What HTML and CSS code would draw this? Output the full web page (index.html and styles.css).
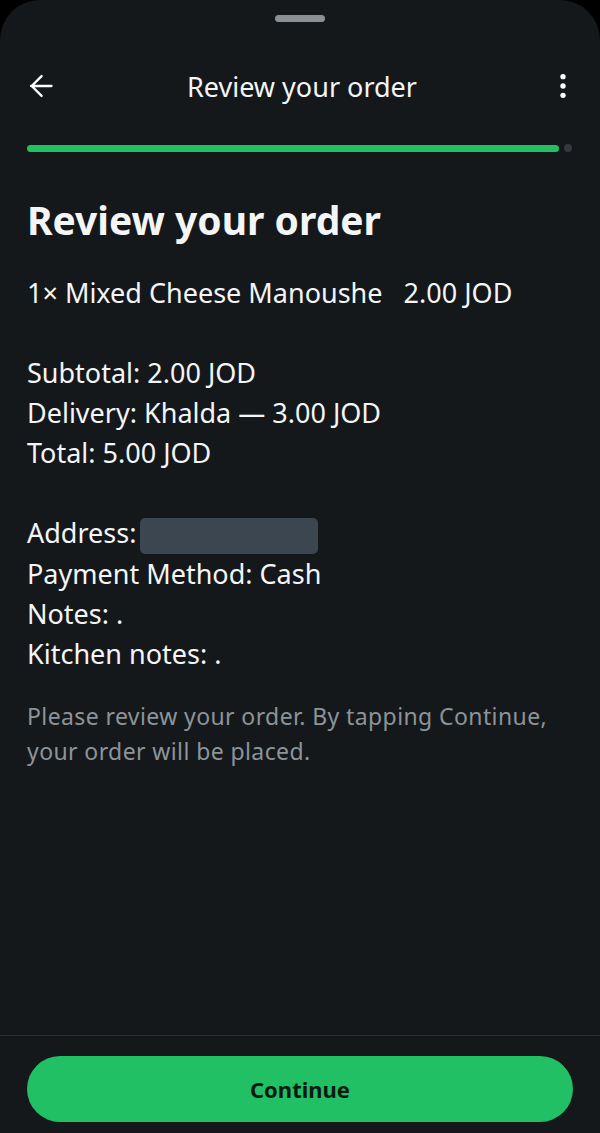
FILE: index.html
```html
<!DOCTYPE html>
<html lang="en">
<head>
<meta charset="UTF-8">
<meta name="viewport" content="width=device-width, initial-scale=1.0">
<title>Review your order</title>
<link rel="stylesheet" href="styles.css">
</head>
<body>

<div class="sheet">
    <div class="handle"></div>

    <div class="topbar">
        <button class="icon-btn" aria-label="Back">
            <svg width="28" height="28" viewBox="0 0 24 24" fill="none" stroke="#fff" stroke-width="2" stroke-linecap="round" stroke-linejoin="round">
                <path d="M21 12H3.5M12.5 3.5L4 12l8.5 8.5"/>
            </svg>
        </button>
        <div class="topbar-title">Review your order</div>
        <button class="icon-btn" aria-label="More">
            <svg width="28" height="28" viewBox="0 0 24 24" fill="#fff">
                <circle cx="12" cy="4" r="2.3"/>
                <circle cx="12" cy="12" r="2.3"/>
                <circle cx="12" cy="20" r="2.3"/>
            </svg>
        </button>
    </div>

    <div class="progress">
        <div class="progress-bar"></div>
        <div class="progress-dot"></div>
    </div>

    <div class="content">
        <h1>Review your order</h1>
        <div class="summary">
            <p>1× Mixed Cheese Manoushe&nbsp;&nbsp; 2.00 JOD</p>
            <p class="gap">Subtotal: 2.00 JOD</p>
            <p>Delivery: Khalda — 3.00 JOD</p>
            <p>Total: 5.00 JOD</p>
            <p class="gap">Address:<span class="redacted"></span></p>
            <p>Payment Method: Cash</p>
            <p>Notes: .</p>
            <p>Kitchen notes: .</p>
        </div>
        <p class="hint">Please review your order. By tapping Continue, your order will be placed.</p>
    </div>

    <div class="footer">
        <button class="continue-btn">Continue</button>
    </div>
</div>

</body>
</html>
```

FILE: styles.css
```css
body {
    margin: 0;
    padding: 0;
    background-color: #000;
    font-family: "Noto Sans", "Open Sans", sans-serif;
    color: #f3f5f7;
}
.sheet {
    height: 1133px;
    background-color: #15181b;
    border-radius: 40px 40px 0 0;
    display: flex;
    flex-direction: column;
}
.handle {
    width: 50px;
    height: 7px;
    border-radius: 4px;
    background-color: #8b9095;
    margin: 15px auto 0;
}
.topbar {
    display: flex;
    align-items: center;
    justify-content: space-between;
    padding: 0 17px 0 21px;
    height: 56px;
    margin-top: 36px;
}
.icon-btn {
    background: none;
    border: none;
    padding: 0;
    width: 40px;
    height: 40px;
    display: flex;
    align-items: center;
    justify-content: center;
}
.topbar-title {
    font-size: 27px;
    color: #f3f5f7;
}
.progress {
    display: flex;
    align-items: center;
    gap: 5px;
    padding: 0 28px 0 27px;
    margin-top: 30px;
}
.progress-bar {
    flex: 1;
    height: 7px;
    border-radius: 4px;
    background-color: #22c060;
}
.progress-dot {
    width: 8px;
    height: 8px;
    border-radius: 50%;
    background-color: #34383c;
}
.content {
    flex: 1;
    padding: 0 27px;
}
.content h1 {
    font-size: 39px;
    font-weight: 700;
    margin: 43px 0 0;
    line-height: 50px;
}
.summary {
    margin-top: 28px;
}
.summary p {
    margin: 0;
    font-size: 27px;
    line-height: 40px;
}
.summary p.gap {
    margin-top: 40px;
}
.redacted {
    display: inline-block;
    width: 178px;
    height: 36px;
    margin-left: 4px;
    border-radius: 5px;
    background-color: #3b4650;
    vertical-align: middle;
}
.hint {
    margin: 25px 0 0;
    font-size: 23px;
    letter-spacing: 0.4px;
    line-height: 35px;
    color: #8c9499;
}
.footer {
    border-top: 1px solid #2a2e33;
    padding: 20px 27px 11px;
}
.continue-btn {
    width: 100%;
    height: 66px;
    border: none;
    border-radius: 33px;
    background-color: #22c065;
    color: #0b1a10;
    font-family: "Noto Sans", sans-serif;
    font-size: 22px;
    font-weight: 700;
}
```
